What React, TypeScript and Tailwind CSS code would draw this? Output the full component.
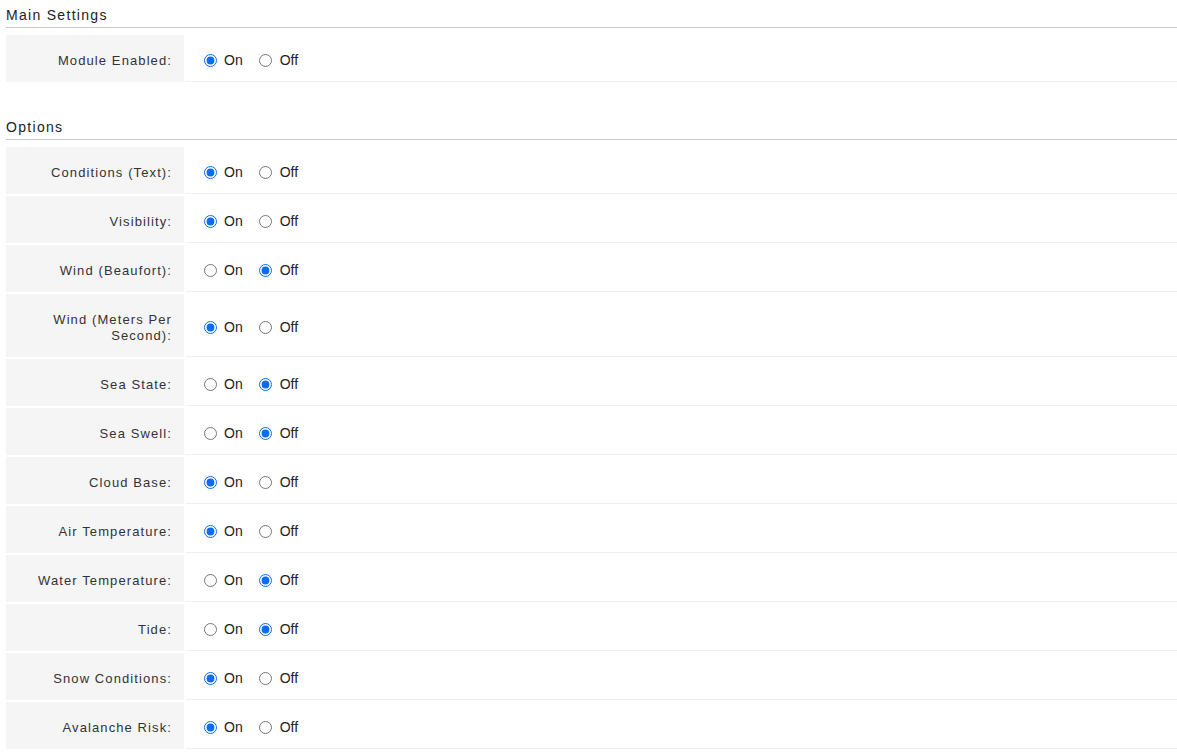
const mainSettings = [{ label: "Module Enabled:", on: true }];

const options = [
  { label: "Conditions (Text):", on: true },
  { label: "Visibility:", on: true },
  { label: "Wind (Beaufort):", on: false },
  { label: "Wind (Meters Per Second):", on: true },
  { label: "Sea State:", on: false },
  { label: "Sea Swell:", on: false },
  { label: "Cloud Base:", on: true },
  { label: "Air Temperature:", on: true },
  { label: "Water Temperature:", on: false },
  { label: "Tide:", on: false },
  { label: "Snow Conditions:", on: true },
  { label: "Avalanche Risk:", on: true },
];

type Setting = { label: string; on: boolean };

function SectionHeading({ title, first }: { title: string; first?: boolean }) {
  return (
    <h2
      className={`border-b border-[#c8c8c8] pb-[2px] text-[14px] leading-[20px] font-normal tracking-[1.3px] text-[#222] ${
        first ? "pt-[5px]" : "mt-[35px]"
      }`}
    >
      {title}
    </h2>
  );
}

function SettingRow({ s, name }: { s: Setting; name: string }) {
  return (
    <div className="flex gap-[2px]">
      <div className="w-[178px] shrink-0 bg-[#f5f5f5] pt-[17.5px] pr-3 pb-[13.5px] pl-2 text-right text-[13px] leading-4 tracking-[1.1px] text-[#333]">
        {s.label}
      </div>
      <div className="flex flex-1 items-center border-b border-[#efefef] pt-[4px] pl-[18px] text-[14px] text-[#222]">
        <label className="flex items-center">
          <input
            type="radio"
            name={name}
            defaultChecked={s.on}
            className="m-0 h-[13px] w-[13px] accent-[#0b6cf0]"
          />
          <span className="ml-[7px]">On</span>
        </label>
        <label className="ml-[16px] flex items-center">
          <input
            type="radio"
            name={name}
            defaultChecked={!s.on}
            className="m-0 h-[13px] w-[13px] accent-[#0b6cf0]"
          />
          <span className="ml-[8px]">Off</span>
        </label>
      </div>
    </div>
  );
}

export default function App() {
  return (
    <div className="min-h-screen bg-white pl-[6px] font-['Liberation_Sans',Arial,sans-serif]">
      <SectionHeading title="Main Settings" first />
      <div className="mt-[7px] flex flex-col gap-[2px]">
        {mainSettings.map((s, i) => (
          <SettingRow key={s.label} s={s} name={`main-${i}`} />
        ))}
      </div>

      <SectionHeading title="Options" />
      <div className="mt-[7px] flex flex-col gap-[2px]">
        {options.map((s, i) => (
          <SettingRow key={s.label} s={s} name={`opt-${i}`} />
        ))}
      </div>
    </div>
  );
}
